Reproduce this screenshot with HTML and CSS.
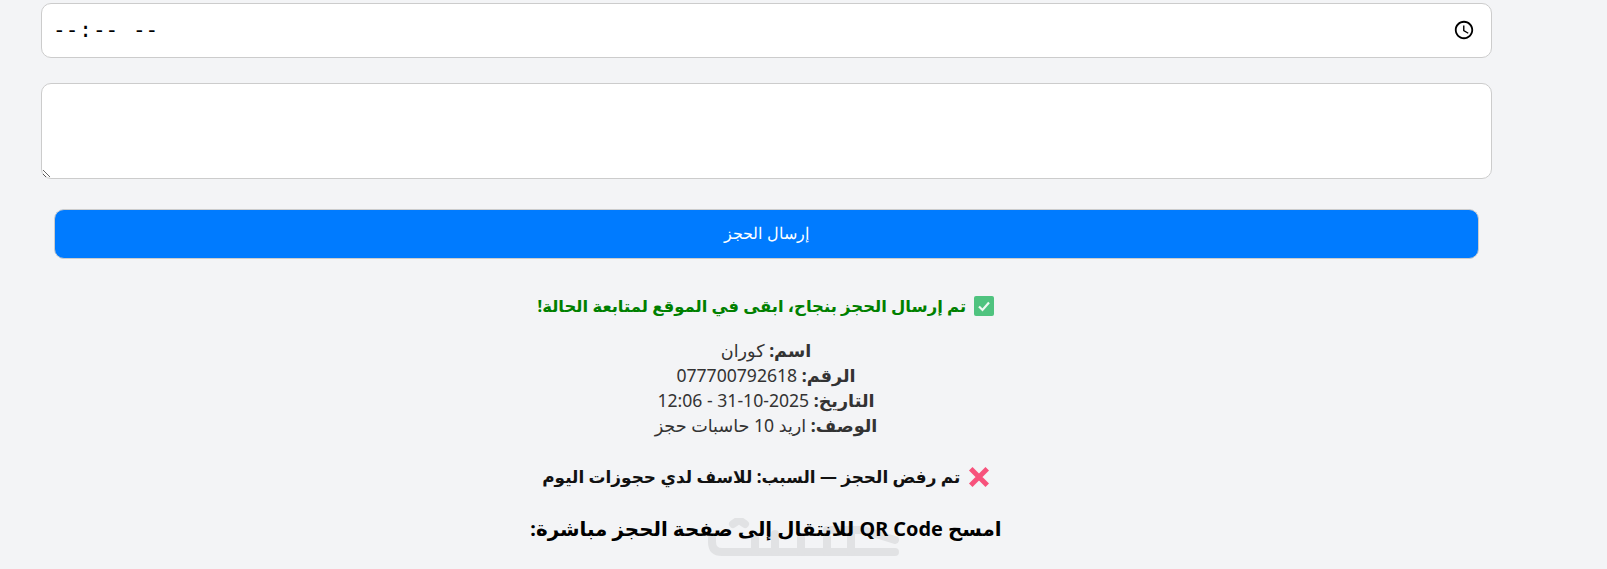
FILE: index.html
```html
<!DOCTYPE html>
<html lang="ar">
<head>
    <meta charset="UTF-8">
    <title>حجز</title>
    <link rel="stylesheet" href="styles.css">
</head>
<body>
    <div class="page">
        <form class="bookingForm">
            <input class="timeInput" type="time">
            <textarea class="descInput" dir="rtl"></textarea>
            <button class="submitBtn" type="button" dir="rtl">إرسال الحجز</button>
        </form>

        <div class="results" dir="rtl">
            <p class="okMsg"><svg class="okBox" viewBox="0 0 20 20"><rect width="20" height="20" rx="2"/><path d="M5 10.5L8.5 14L15 6.5"/></svg> تم إرسال الحجز بنجاح، ابقى في الموقع لمتابعة الحالة!</p>
            <p class="details">
                <b>اسم:</b> كوران<br>
                <b>الرقم:</b> 077700792618<br>
                <b>التاريخ:</b> 2025-10-31 - 12:06<br>
                <b>الوصف:</b> اريد 10 حاسبات حجز
            </p>
            <p class="rejectMsg"><svg class="crossIcon" viewBox="0 0 20 20"><path d="M2.5 2.5L17.5 17.5M17.5 2.5L2.5 17.5"/></svg> تم رفض الحجز — السبب: للاسف لدي حجوزات اليوم</p>
            <h3 class="qrTitle">امسح QR Code للانتقال إلى صفحة الحجز مباشرة:</h3>
        </div>
    </div>

    <!-- faded logo behind the QR heading -->
    <svg class="watermark" viewBox="0 0 200 52">
        <path d="M7 20V24Q7 34 17 34H190"/>
        <path d="M28 6L34 2L40 6"/>
        <path d="M50 20V34M70 16V34M96 20V34M122 20V34M146 14V34"/>
        <path d="M122 12H158L190 22"/>
    </svg>
</body>
</html>
```

FILE: styles.css
```css
html, body { margin: 0; height: 569px; overflow: hidden; }
body { background-color: #f3f4f6; font-family: "Noto Sans", "DejaVu Sans", sans-serif; color: #333; position: relative; }
.page { width: 1532px; padding-top: 3px; position: relative; z-index: 1; }
.bookingForm { display: flex; flex-direction: column; padding: 0 0 0 41px; }
.timeInput, .descInput { box-sizing: border-box; width: 1451px; background: #fff; border: 1px solid #ccc; border-radius: 10px; }
.timeInput { height: 55px; padding: 0 13px 0 10px; font-size: 21px; margin-bottom: 25px; }
.descInput { height: 96px; margin-bottom: 30px; display: block; }
.submitBtn { box-sizing: border-box; width: 1425px; height: 50px; margin-left: 13px; padding-bottom: 3px; background-color: #007bff; color: #fff; border: 1px solid #ccc; border-radius: 10px; font-family: "Liberation Sans", sans-serif; font-size: 16px; }
.results { text-align: center; }
.results p { margin: 0; }
.okMsg { color: green; font-weight: bold; font-size: 16.45px; margin-top: 35px !important; }
.okBox { width: 20px; height: 20px; margin-left: 4px; vertical-align: -4px; }
.okBox rect { fill: #4fc37f; }
.okBox path { fill: none; stroke: #eef8f2; stroke-width: 2.2; }
.details { margin-top: 21px !important; font-size: 17.6px; line-height: 25px; }
.rejectMsg { color: #111; font-weight: bold; font-size: 16.9px; margin-top: 27px !important; }
.crossIcon { width: 22px; height: 22px; margin-left: 3px; vertical-align: -5px; }
.crossIcon path { stroke: #f7527c; stroke-width: 4.5; fill: none; }
.qrTitle { color: #000; font-size: 19.85px; margin: 27px 0 0; }
.watermark { position: absolute; left: 705px; top: 518px; width: 200px; height: 52px; }
.watermark path { fill: none; stroke: #e1e2e4; stroke-width: 8; stroke-linecap: round; stroke-linejoin: round; }
```
